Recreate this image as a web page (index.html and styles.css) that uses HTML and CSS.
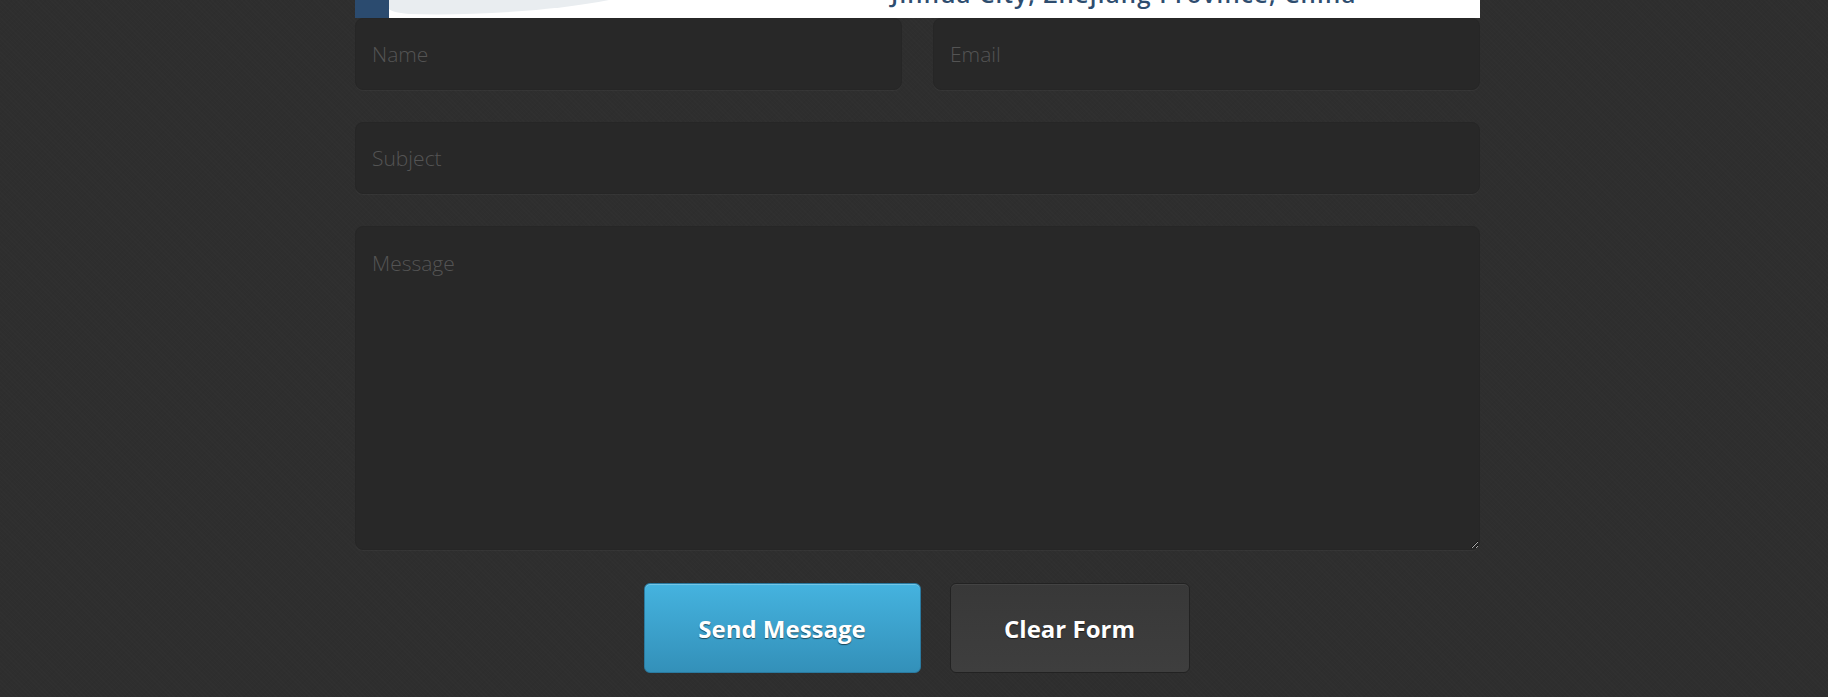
FILE: index.html
```html
<!DOCTYPE html>
<html lang="en">
<head>
<meta charset="utf-8">
<title>Contact</title>
<link rel="stylesheet" href="styles.css">
</head>
<body>
<div class="page">
  <div class="container">
    <div class="banner">
      <div class="banner-bar"></div>
      <svg class="banner-swoosh" width="220" height="18" viewBox="0 0 220 18" aria-hidden="true">
        <path d="M0 0 H220 C170 10 90 16 20 14 C8 13 2 11 0 9 Z" fill="#e9edf0"/>
      </svg>
      <div class="banner-text">Jinhua City, Zhejiang Province, China</div>
    </div>
    <form class="contact-form">
      <div class="row two">
        <input class="field" type="text" placeholder="Name">
        <input class="field" type="email" placeholder="Email">
      </div>
      <div class="row">
        <input class="field" type="text" placeholder="Subject">
      </div>
      <div class="row">
        <textarea class="field area" placeholder="Message"></textarea>
      </div>
      <div class="actions">
        <button type="button" class="btn btn-send">Send Message</button>
        <button type="reset" class="btn btn-clear">Clear Form</button>
      </div>
    </form>
  </div>
</div>
</body>
</html>
```
FILE: styles.css
```css
html, body {
  margin: 0;
  padding: 0;
}
body {
  background-color: #2e2e2e;
  background-image:
    repeating-linear-gradient(45deg, rgba(255,255,255,0.012) 0 1px, transparent 1px 3px),
    repeating-linear-gradient(-45deg, rgba(0,0,0,0.03) 0 1px, transparent 1px 4px);
  font-family: "Open Sans", "Liberation Sans", sans-serif;
  height: 697px;
  overflow: hidden;
}
.page {
  padding-left: 7px;
  display: flex;
  justify-content: center;
}
.container {
  width: 1125px;
  display: flex;
  flex-direction: column;
}
.banner {
  height: 18px;
  background: #ffffff;
  display: flex;
  align-items: flex-start;
  overflow: hidden;
}
.banner-bar {
  width: 34px;
  height: 18px;
  background: #2b4b6f;
  flex: none;
}
.banner-swoosh {
  flex: none;
  display: block;
}
.banner-text {
  margin-left: 282px;
  margin-top: -22px;
  font-size: 24px;
  line-height: 32px;
  font-weight: 600;
  color: #2e4d6f;
  letter-spacing: 1.2px;
  white-space: nowrap;
}
.contact-form {
  display: flex;
  flex-direction: column;
  gap: 32px;
}
.row {
  display: flex;
}
.row.two {
  gap: 31px;
}
.field {
  flex: 1;
  min-width: 0;
  box-sizing: border-box;
  height: 72px;
  margin: 0;
  padding: 0 16px;
  background: #282828;
  border: 1px solid #262626;
  border-radius: 8px;
  box-shadow: 0 1px 0 rgba(255,255,255,0.035);
  font-family: "Open Sans", "Liberation Sans", sans-serif;
  font-weight: 300;
  font-size: 21px;
  color: #cccccc;
  outline: none;
}
.field::placeholder {
  color: #545454;
  opacity: 1;
}
.area {
  height: 324px;
  padding: 21px 16px 16px;
  line-height: 30px;
  resize: vertical;
}
.actions {
  display: flex;
  justify-content: center;
  gap: 29px;
  margin-top: 1px;
  padding-right: 2px;
}
.btn {
  height: 90px;
  border-radius: 6px;
  font-family: "Open Sans", "Liberation Sans", sans-serif;
  font-weight: 700;
  font-size: 24px;
  color: #ffffff;
  text-shadow: 0 1px 1px rgba(0,0,0,0.55);
  cursor: pointer;
  padding: 0;
}
.btn-send {
  width: 277px;
  background: linear-gradient(#45b3df, #3390b9);
  border: 1px solid #2a7aa0;
  box-shadow: inset 0 1px 0 rgba(255,255,255,0.25);
}
.btn-clear {
  width: 240px;
  background: linear-gradient(#383838, #3e3e3e);
  border: 1px solid #222222;
  box-shadow: inset 0 1px 0 rgba(255,255,255,0.06);
}
```
